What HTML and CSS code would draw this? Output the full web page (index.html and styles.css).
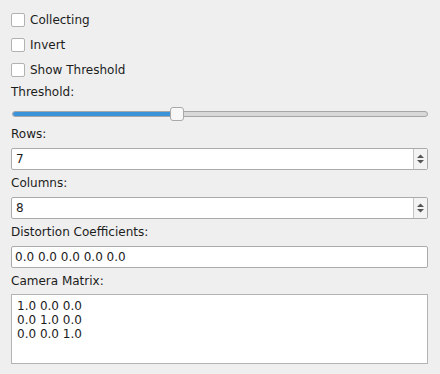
FILE: index.html
```html
<!DOCTYPE html>
<html lang="en">
<head>
    <meta charset="UTF-8">
    <title>Calibration</title>
    <link rel="stylesheet" href="styles.css">
</head>
<body>
    <div class="panel">
        <label class="check"><span class="box"></span>Collecting</label>
        <label class="check"><span class="box"></span>Invert</label>
        <label class="check"><span class="box"></span>Show Threshold</label>

        <div class="caption first">Threshold:</div>
        <div class="slider">
            <div class="groove">
                <div class="fill"></div>
            </div>
            <div class="handle"></div>
        </div>

        <div class="caption">Rows:</div>
        <div class="spinbox">
            <div class="value">7</div>
            <div class="arrows">
                <svg width="9" height="16" viewBox="0 0 9 16">
                    <path d="M1 7 L4.5 3.5 L8 7 Z" fill="#555"/>
                    <path d="M1 9 L4.5 12.5 L8 9 Z" fill="#555"/>
                </svg>
            </div>
        </div>

        <div class="caption">Columns:</div>
        <div class="spinbox">
            <div class="value">8</div>
            <div class="arrows">
                <svg width="9" height="16" viewBox="0 0 9 16">
                    <path d="M1 7 L4.5 3.5 L8 7 Z" fill="#555"/>
                    <path d="M1 9 L4.5 12.5 L8 9 Z" fill="#555"/>
                </svg>
            </div>
        </div>

        <div class="caption">Distortion Coefficients:</div>
        <div class="lineedit">0.0 0.0 0.0 0.0 0.0</div>

        <div class="caption">Camera Matrix:</div>
        <div class="textedit">1.0 0.0 0.0<br>0.0 1.0 0.0<br>0.0 0.0 1.0</div>
    </div>
</body>
</html>
```

FILE: styles.css
```css
* {
    box-sizing: border-box;
    margin: 0;
    padding: 0;
}

body {
    font-family: "DejaVu Sans", sans-serif;
    font-size: 12px;
    line-height: 14px;
    color: #1c1c1c;
    background-color: #efefef;
    width: 440px;
    height: 374px;
    overflow: hidden;
}

.panel {
    display: flex;
    flex-direction: column;
    padding: 7px 12px 0 11px;
}

.check {
    display: flex;
    align-items: center;
    height: 25px;
    gap: 5px;
}

.box {
    width: 14px;
    height: 14px;
    background-color: #ffffff;
    border: 1px solid #b2b2b2;
    border-radius: 2px;
}

.caption {
    height: 14px;
    margin-top: 6px;
    margin-bottom: 7px;
}

.caption.first {
    margin-top: 3px;
    margin-bottom: 8px;
}

.slider {
    position: relative;
    height: 14px;
    padding-top: 4px;
    margin-left: 1px;
}

.groove {
    height: 6px;
    background-color: #d8d8d8;
    border: 1px solid #a6a6a6;
    border-radius: 3px;
    overflow: hidden;
}

.fill {
    width: 164px;
    height: 100%;
    background-color: #3b92d9;
    border-right: 1px solid #2a6fa8;
}

.handle {
    position: absolute;
    top: 0;
    left: 158px;
    width: 14px;
    height: 14px;
    background-color: #f7f7f7;
    border: 1px solid #a9a9a9;
    border-radius: 3px;
}

.spinbox,
.lineedit {
    display: flex;
    height: 22px;
    background-color: #ffffff;
    border: 1px solid #ababab;
    border-radius: 2px;
}

.spinbox .value {
    flex: 1;
    padding: 3px 4px;
}

.arrows {
    width: 14px;
    display: flex;
    align-items: center;
    justify-content: center;
    background-color: #f3f3f3;
    border-left: 1px solid #c4c4c4;
}

.lineedit {
    padding: 3px 3px;
}

.textedit {
    height: 70px;
    margin-top: -1px;
    padding: 4px 5px;
    background-color: #ffffff;
    border: 1px solid #b4b4b4;
}
```
